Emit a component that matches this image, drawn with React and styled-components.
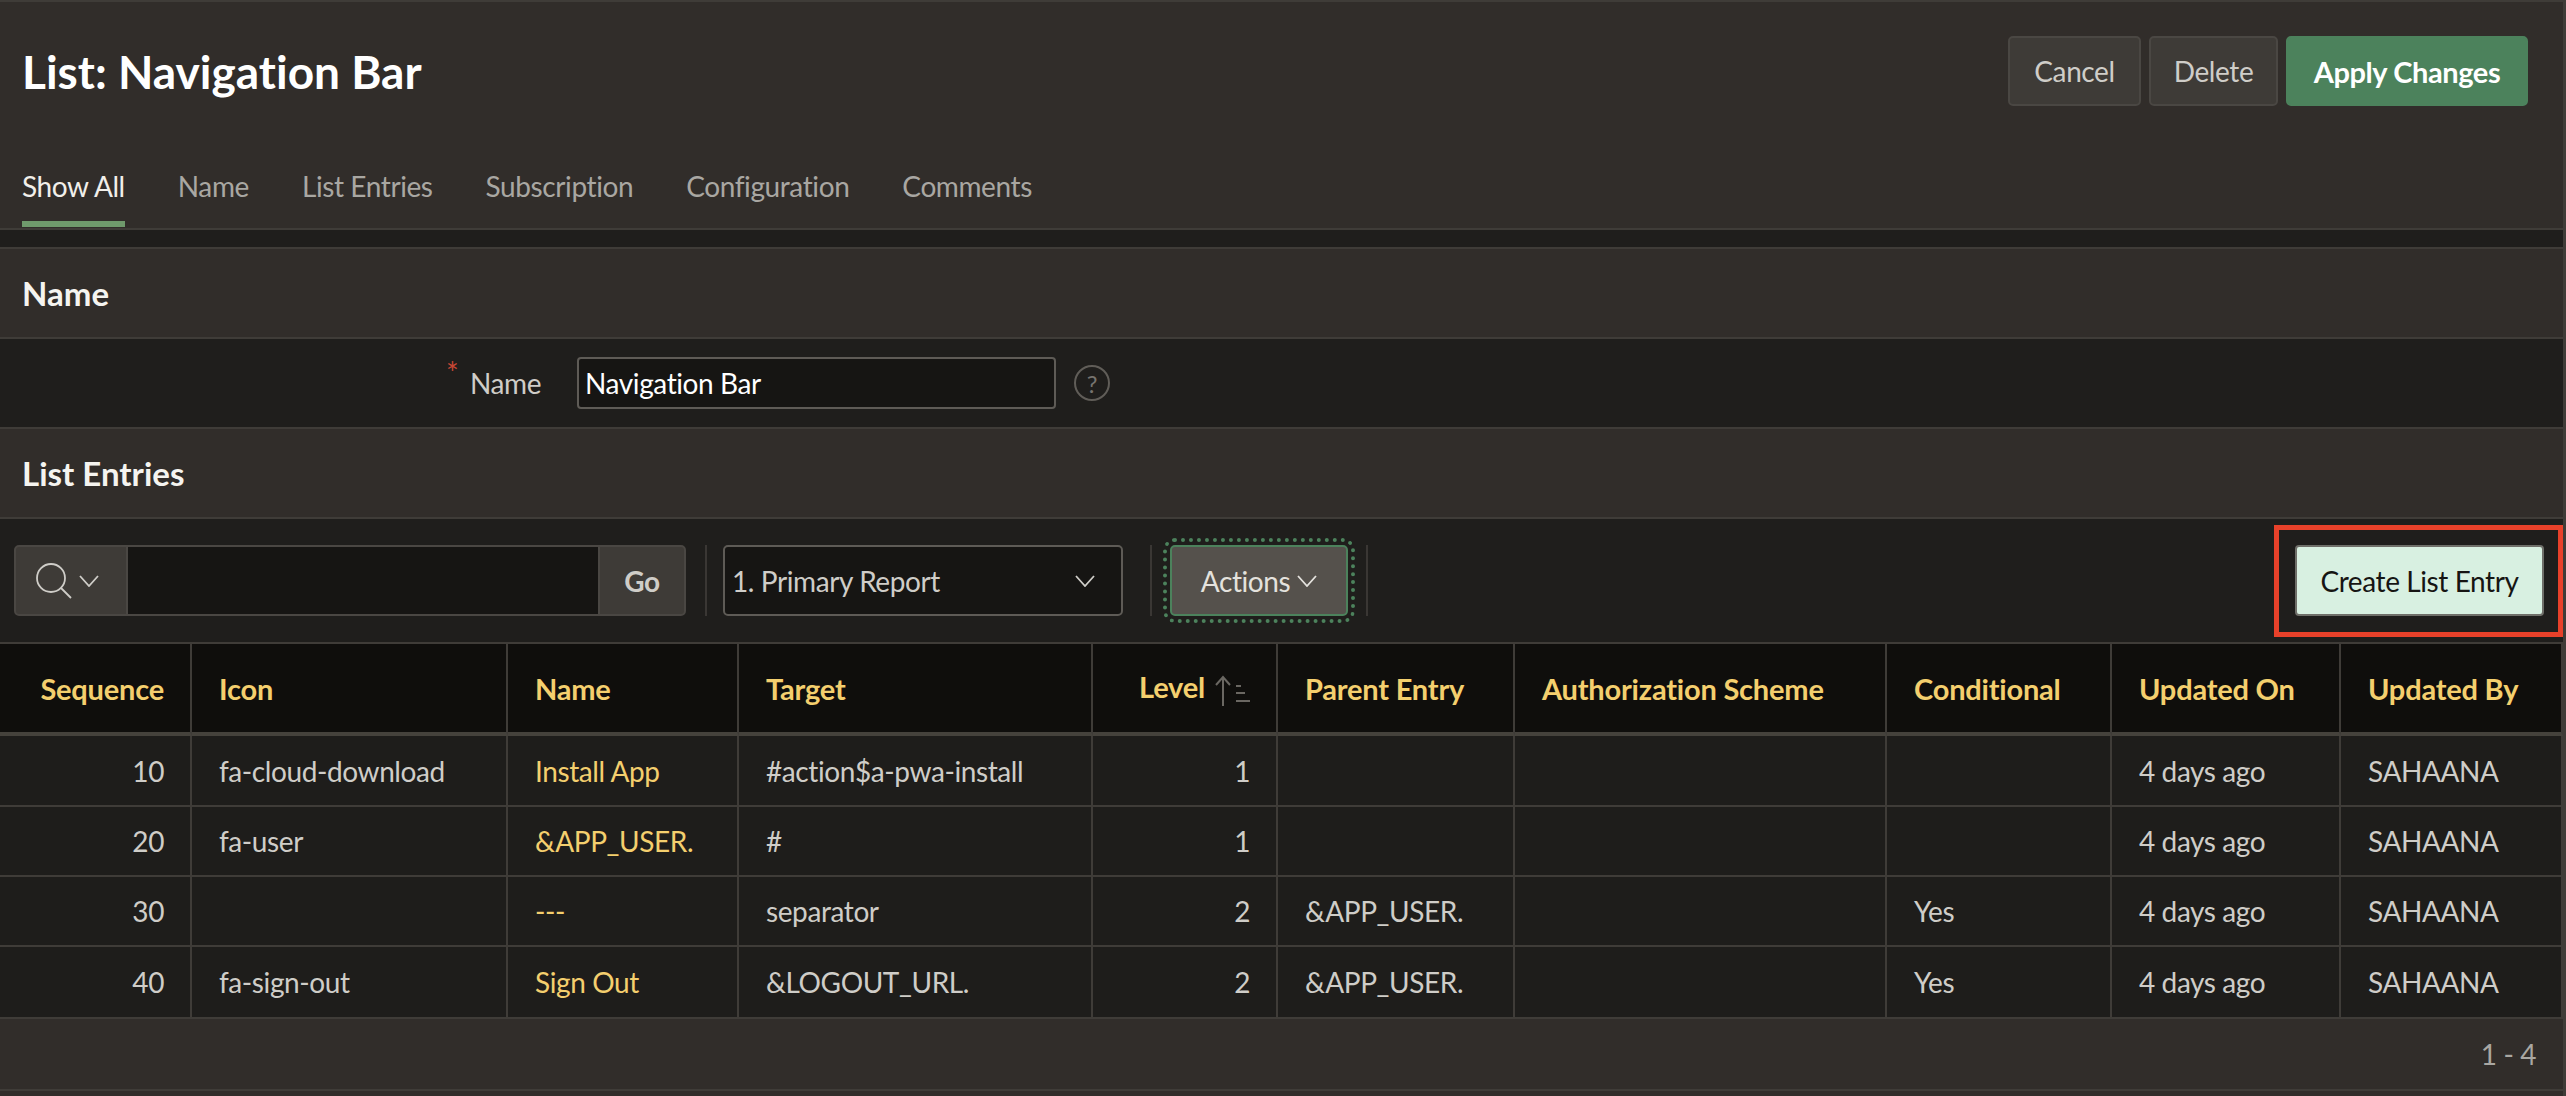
import React from 'react'
import styled, { createGlobalStyle } from 'styled-components'

const LINE = '#3f3c38'
const PANEL = '#312d2a'
const DARK = '#1f1e1c'
const YELLOW = '#f4cf6e'
const TEXT = '#cfcdc8'

const GlobalStyle = createGlobalStyle`
  html, body {
    margin: 0;
    padding: 0;
    background: ${PANEL};
  }
  body {
    font-family: Lato, "Open Sans", sans-serif;
    font-size: 28px;
    font-variant-ligatures: none;
    letter-spacing: -0.4px;
    color: ${TEXT};
  }
  button, input {
    letter-spacing: -0.4px;
    font-variant-ligatures: none;
  }
  * {
    box-sizing: border-box;
  }
`

const Page = styled.div`
  width: 2566px;
  height: 1096px;
  overflow: hidden;
  border-top: 2px solid ${LINE};
  border-right: 3px solid ${LINE};
`

const TitleRow = styled.header`
  display: flex;
  justify-content: space-between;
  align-items: center;
  height: 70px;
  margin-top: 34px;
  padding: 0 35px 0 22px;
`

const Title = styled.h1`
  margin: 0;
  font-size: 46px;
  font-weight: 700;
  letter-spacing: 0;
  color: #fff;
`

const ButtonRow = styled.div`
  display: flex;
  gap: 8px;
`

const Button = styled.button`
  height: 70px;
  padding: 0;
  width: ${p => p.$width}px;
  border-radius: 5px;
  border: 2px solid ${p => (p.$primary ? '#4c825c' : '#4a4743')};
  background: ${p => (p.$primary ? '#4c825c' : '#3e3b37')};
  color: ${p => (p.$primary ? '#fff' : TEXT)};
  font: ${p => (p.$primary ? 700 : 400)} ${p => (p.$primary ? 29 : 28)}px Lato, sans-serif;
`

const Tabs = styled.nav`
  display: flex;
  gap: 53px;
  height: 87px;
  margin-top: 37px;
  padding-left: 22px;
  border-bottom: 2px solid ${LINE};
`

const Tab = styled.a`
  height: 84px;
  padding-top: 4px;
  line-height: 78px;
  white-space: nowrap;
  color: ${p => (p.$active ? '#f1efea' : '#a9a7a2')};
  border-bottom: 6px solid ${p => (p.$active ? '#6f9a6c' : 'transparent')};
`

const Strip = styled.div`
  height: 17px;
  background: ${DARK};
`

const SectionHead = styled.h2`
  display: flex;
  align-items: center;
  height: 92px;
  margin: 0;
  padding-left: 22px;
  border-top: 2px solid ${LINE};
  border-bottom: 2px solid ${LINE};
  font-size: 33px;
  font-weight: 700;
  letter-spacing: 0;
  color: #f5f4f0;
`

const FormRow = styled.div`
  display: flex;
  align-items: center;
  height: 88px;
  background: ${DARK};
`

const FieldLabel = styled.label`
  position: relative;
  margin-left: 470px;
  width: 107px;
  color: ${TEXT};
  &::before {
    content: '*';
    position: absolute;
    left: -24px;
    top: -12px;
    color: #c74634;
    font-size: 30px;
  }
`

const NameInput = styled.input`
  width: 479px;
  height: 52px;
  padding: 0 6px;
  border: 2px solid #5e5b56;
  border-radius: 4px;
  background: #161513;
  color: #fff;
  font: 400 28px Lato, sans-serif;
`

const Help = styled.span`
  display: flex;
  align-items: center;
  justify-content: center;
  width: 36px;
  height: 36px;
  margin-left: 18px;
  border: 2px solid #605d58;
  border-radius: 50%;
  color: #77746f;
  font-size: 24px;
`

const Toolbar = styled.div`
  display: flex;
  align-items: center;
  height: 123px;
  padding: 0 0 0 14px;
  background: ${DARK};
`

const SearchGroup = styled.div`
  display: flex;
  width: 672px;
  height: 71px;
`

const SearchButton = styled.button`
  display: flex;
  align-items: center;
  width: 114px;
  padding: 0 0 0 20px;
  gap: 7px;
  background: #3e3b37;
  border: 2px solid #4a4743;
  border-radius: 5px 0 0 5px;
`

const SearchInput = styled.input`
  flex: 1;
  min-width: 0;
  background: #161513;
  border: 2px solid #4a4743;
  border-width: 2px 0;
  outline: none;
`

const GoButton = styled.button`
  width: 88px;
  background: #3e3b37;
  border: 2px solid #4a4743;
  border-radius: 0 5px 5px 0;
  color: ${TEXT};
  font: 700 28px Lato, sans-serif;
`

const Separator = styled.span`
  width: 2px;
  height: 71px;
  margin: 0 ${p => p.$right}px 0 ${p => p.$left}px;
  background: #3a3734;
`

const ReportSelect = styled.div`
  display: flex;
  align-items: center;
  justify-content: space-between;
  width: 400px;
  height: 71px;
  padding: 0 26px 0 7px;
  border: 2px solid #5e5b56;
  border-radius: 5px;
  background: #161513;
  color: ${TEXT};
`

const ActionsButton = styled.button`
  display: flex;
  align-items: center;
  justify-content: center;
  gap: 7px;
  width: 178px;
  height: 71px;
  padding: 0;
  background: #55514c;
  border: 2px solid #4c825c;
  border-radius: 5px;
  outline: 4px dotted #4c825c;
  outline-offset: 3px;
  color: #e4e2dd;
  font: 400 28px Lato, sans-serif;
`

const CreateWrap = styled.div`
  position: relative;
  margin-left: auto;
  margin-right: 19px;
  &::after {
    content: '';
    position: absolute;
    inset: -20px -19px -21px -21px;
    border: 5px solid #e8412a;
    pointer-events: none;
  }
`

const CreateButton = styled.button`
  display: block;
  width: 249px;
  height: 71px;
  padding: 0;
  background: #d8f0e1;
  border: 2px solid #6f6f69;
  border-radius: 4px;
  color: #161513;
  font: 400 28px Lato, sans-serif;
`

const Table = styled.table`
  width: 2563px;
  table-layout: fixed;
  border-collapse: separate;
  border-spacing: 0;
  background: #1e1d1b;
  tbody tr:first-child td {
    height: 71px;
  }
  tbody tr:last-child td {
    height: 72px;
  }
`

const Th = styled.th`
  height: 94px;
  padding: 0 ${p => (p.$right ? 26 : 27)}px 0 27px;
  background: #0f0e0c;
  border-top: 2px solid ${LINE};
  border-bottom: 4px solid #45423c;
  border-right: 2px solid ${LINE};
  color: ${YELLOW};
  font-size: 29px;
  font-weight: 700;
  letter-spacing: -0.2px;
  text-align: ${p => (p.$right ? 'right' : 'left')};
  white-space: nowrap;
`

const SortIcon = styled.svg`
  display: inline-block;
  vertical-align: middle;
  margin-left: 10px;
`

const Td = styled.td`
  height: 70px;
  padding: 0 ${p => (p.$right ? 26 : 27)}px 0 27px;
  border-bottom: 2px solid ${LINE};
  border-right: 2px solid ${LINE};
  color: ${p => (p.$link ? YELLOW : TEXT)};
  text-align: ${p => (p.$right ? 'right' : 'left')};
  white-space: nowrap;
`

const Footer = styled.div`
  display: flex;
  align-items: center;
  justify-content: flex-end;
  height: 72px;
  padding-right: 27px;
  border-bottom: 2px solid ${LINE};
  color: #a9a7a2;
`

const Chevron = ({ color = '#cfcdc8' }) => (
  <svg width="20" height="12" viewBox="0 0 20 12" fill="none" stroke={color} strokeWidth="1.8">
    <path d="M1 1l9 10 9-10" />
  </svg>
)

const columns = [
  { title: 'Sequence', width: 192, right: true },
  { title: 'Icon', width: 316 },
  { title: 'Name', width: 231 },
  { title: 'Target', width: 354 },
  { title: 'Level', width: 185, right: true, sorted: true },
  { title: 'Parent Entry', width: 237 },
  { title: 'Authorization Scheme', width: 372 },
  { title: 'Conditional', width: 225 },
  { title: 'Updated On', width: 229 },
  { title: 'Updated By', width: 222 },
]

const rows = [
  ['10', 'fa-cloud-download', 'Install App', '#action$a-pwa-install', '1', '', '', '', '4 days ago', 'SAHAANA'],
  ['20', 'fa-user', '&APP_USER.', '#', '1', '', '', '', '4 days ago', 'SAHAANA'],
  ['30', '', '---', 'separator', '2', '&APP_USER.', '', 'Yes', '4 days ago', 'SAHAANA'],
  ['40', 'fa-sign-out', 'Sign Out', '&LOGOUT_URL.', '2', '&APP_USER.', '', 'Yes', '4 days ago', 'SAHAANA'],
]

const tabs = ['Show All', 'Name', 'List Entries', 'Subscription', 'Configuration', 'Comments']

export default function App() {
  return (
    <Page>
      <GlobalStyle />
      <TitleRow>
        <Title>List: Navigation Bar</Title>
        <ButtonRow>
          <Button $width={133}>Cancel</Button>
          <Button $width={129}>Delete</Button>
          <Button $width={242} $primary>Apply Changes</Button>
        </ButtonRow>
      </TitleRow>
      <Tabs>
        {tabs.map((tab, i) => (
          <Tab key={tab} $active={i === 0}>{tab}</Tab>
        ))}
      </Tabs>
      <Strip />
      <SectionHead>Name</SectionHead>
      <FormRow>
        <FieldLabel>Name</FieldLabel>
        <NameInput defaultValue="Navigation Bar" />
        <Help>?</Help>
      </FormRow>
      <SectionHead>List Entries</SectionHead>
      <Toolbar>
        <SearchGroup>
          <SearchButton>
            <svg width="36" height="36" viewBox="0 0 36 36" fill="none" stroke="#cfcdc8" strokeWidth="1.8">
              <circle cx="15" cy="15" r="14" />
              <path d="M25 25l10 10" />
            </svg>
            <Chevron />
          </SearchButton>
          <SearchInput />
          <GoButton>Go</GoButton>
        </SearchGroup>
        <Separator $left={19} $right={16} />
        <ReportSelect>
          1. Primary Report
          <Chevron />
        </ReportSelect>
        <Separator $left={27} $right={18} />
        <ActionsButton>
          Actions
          <Chevron color="#e4e2dd" />
        </ActionsButton>
        <Separator $left={18} $right={0} />
        <CreateWrap>
          <CreateButton>Create List Entry</CreateButton>
        </CreateWrap>
      </Toolbar>
      <Table>
        <colgroup>
          {columns.map(col => (
            <col key={col.title} width={col.width} />
          ))}
        </colgroup>
        <thead>
          <tr>
            {columns.map(col => (
              <Th key={col.title} $right={col.right}>
                {col.title}
                {col.sorted && (
                  <SortIcon width="35" height="32" viewBox="0 0 35 32" fill="none" stroke="#6a6762" strokeWidth="2">
                    <path d="M8 31V2M1 10l7-8 7 8M21 11h5M21 18h9M21 26h14" />
                  </SortIcon>
                )}
              </Th>
            ))}
          </tr>
        </thead>
        <tbody>
          {rows.map(row => (
            <tr key={row[0]}>
              {row.map((value, i) => (
                <Td key={i} $right={columns[i].right} $link={i === 2}>{value}</Td>
              ))}
            </tr>
          ))}
        </tbody>
      </Table>
      <Footer>1 - 4</Footer>
    </Page>
  )
}
